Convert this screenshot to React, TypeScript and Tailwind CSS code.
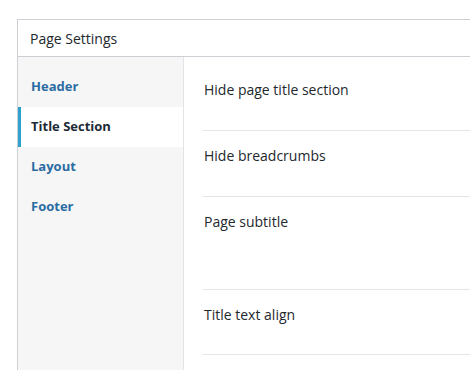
import React from 'react';

const tabs = [
  { label: 'Header', active: false },
  { label: 'Title Section', active: true },
  { label: 'Layout', active: false },
  { label: 'Footer', active: false },
];

const fields = [
  { label: 'Hide page title section', pad: 'pb-[31px]' },
  { label: 'Hide breadcrumbs', pad: 'pb-[31px]' },
  { label: 'Page subtitle', pad: 'pb-[58px]' },
  { label: 'Title text align', pad: 'pb-[30px]' },
  { label: '', pad: 'pb-[30px]' },
];

export default function App() {
  return (
    <div className="h-[370px] w-[470px] overflow-hidden bg-white pl-[17px] pt-[19px] font-['Open_Sans',sans-serif] text-[14px] text-[#23282d]">
      <div className="w-[520px] border border-[#ccd0d4] bg-white">
        <div className="flex h-[37px] items-center border-b border-[#ccd0d4] px-3">
          <span>Page Settings</span>
        </div>

        <div className="flex h-[400px]">
          <ul className="w-[166px] shrink-0 border-r border-[#e2e4e7] bg-[#f6f6f6] pt-[10px] text-[13px]">
            {tabs.map((tab) =>
              tab.active ? (
                <li
                  key={tab.label}
                  className="flex h-[40px] items-center border-l-[3px] border-[#2ea2cc] bg-white pl-[10px] font-bold text-[#1d2b36]"
                >
                  {tab.label}
                </li>
              ) : (
                <li
                  key={tab.label}
                  className="flex h-[40px] items-center pl-[13px] font-bold text-[#2b6ca3]"
                >
                  {tab.label}
                </li>
              )
            )}
          </ul>

          <div className="flex-1 pl-[19px] pt-2">
            {fields.map((f, i) => (
              <div key={i} className={`border-b border-[#e5e5e5] pt-4 ${f.pad}`}>
                <div className="h-[18px] pl-px font-medium leading-[18px]">{f.label}</div>
              </div>
            ))}
          </div>
        </div>
      </div>
    </div>
  );
}
